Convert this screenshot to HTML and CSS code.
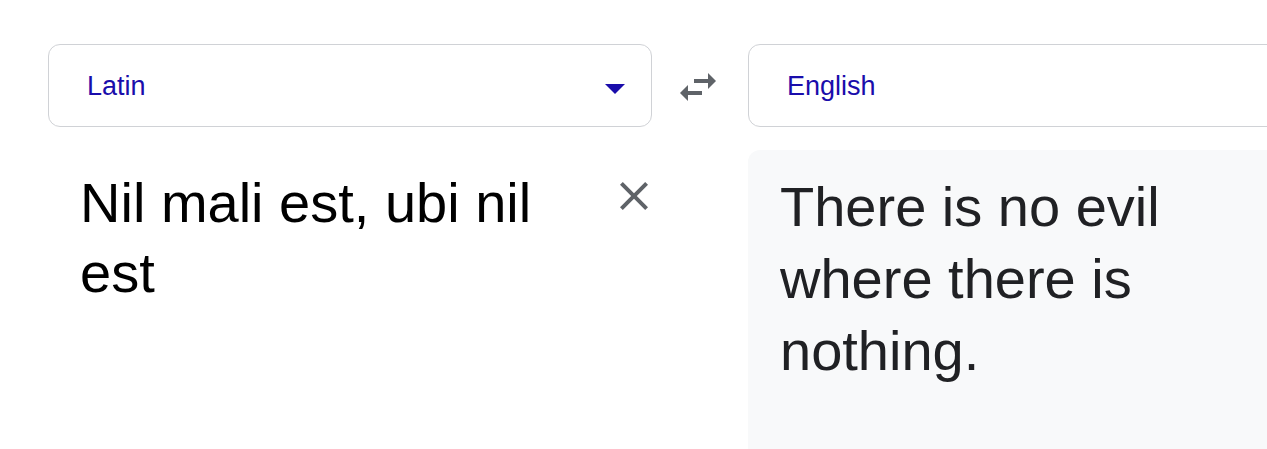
FILE: index.html
```html
<!DOCTYPE html>
<html>
<head>
<meta charset="utf-8">
<link rel="stylesheet" href="styles.css">
</head>
<body>
<div class="translator">
  <div class="lang-box">
    <span class="lang-label">Latin</span>
    <svg class="drop" viewBox="0 0 24 24" width="48" height="48"><path d="M7 10l5 5 5-5z"/></svg>
  </div>
  <div class="swap">
    <svg viewBox="0 0 24 24" width="48" height="48"><path d="M6.99 11L3 15l3.990 4v-3H14v-2H6.99v-3zM21 9l-4-4v3H10v2h7v3l4-4z"/></svg>
  </div>
  <div class="lang-box">
    <span class="lang-label">English</span>
  </div>

  <div class="source">
    <div class="source-text">Nil mali est, ubi nil est</div>
    <div class="clear">
      <svg viewBox="0 0 24 24" width="48" height="48"><path d="M19 6.41L17.59 5 12 10.59 6.41 5 5 6.41 10.59 12 5 17.590 6.41 19 12 13.41 17.59 19 19 17.59 13.41 12z"/></svg>
    </div>
  </div>
  <div class="spacer"></div>
  <div class="target">
    <div class="target-text">There is no evil where there is nothing.</div>
  </div>
</div>
</body>
</html>
```
FILE: styles.css
```css
html, body {
  margin: 0;
  padding: 0;
  background: #ffffff;
  overflow: hidden;
}
body {
  font-family: "Liberation Sans", Arial, sans-serif;
}
.translator {
  display: grid;
  grid-template-columns: 604px 96px 604px;
  grid-template-rows: 83px auto;
  row-gap: 23px;
  padding: 44px 0 0 48px;
  width: 1400px;
}
.lang-box {
  box-sizing: border-box;
  border: 1px solid #d0d2d6;
  border-radius: 12px;
  display: flex;
  align-items: center;
  padding-left: 38px;
  padding-right: 12px;
}
.lang-label {
  flex: 1;
  font-size: 27px;
  color: #1a0dab;
  line-height: 32px;
}
.drop {
  fill: #1a0dab;
  margin-top: 4px;
}
.swap {
  display: flex;
  align-items: center;
  justify-content: center;
  padding-top: 2px;
  padding-right: 4px;
}
.swap svg {
  fill: #5f6368;
}
.source {
  display: flex;
  align-items: flex-start;
  padding-left: 32px;
}
.source-text {
  flex: 1;
  font-size: 56px;
  line-height: 70px;
  color: #000000;
  padding-top: 18px;
}
.clear {
  width: 48px;
  height: 48px;
  margin-top: 22px;
  margin-right: -6px;
}
.clear svg {
  fill: #5f6368;
}
.target {
  background: #f8f9fa;
  border-top-left-radius: 12px;
  padding: 21px 90px 80px 32px;
  min-height: 220px;
}
.target-text {
  font-size: 56px;
  line-height: 72px;
  color: #202124;
}
```
